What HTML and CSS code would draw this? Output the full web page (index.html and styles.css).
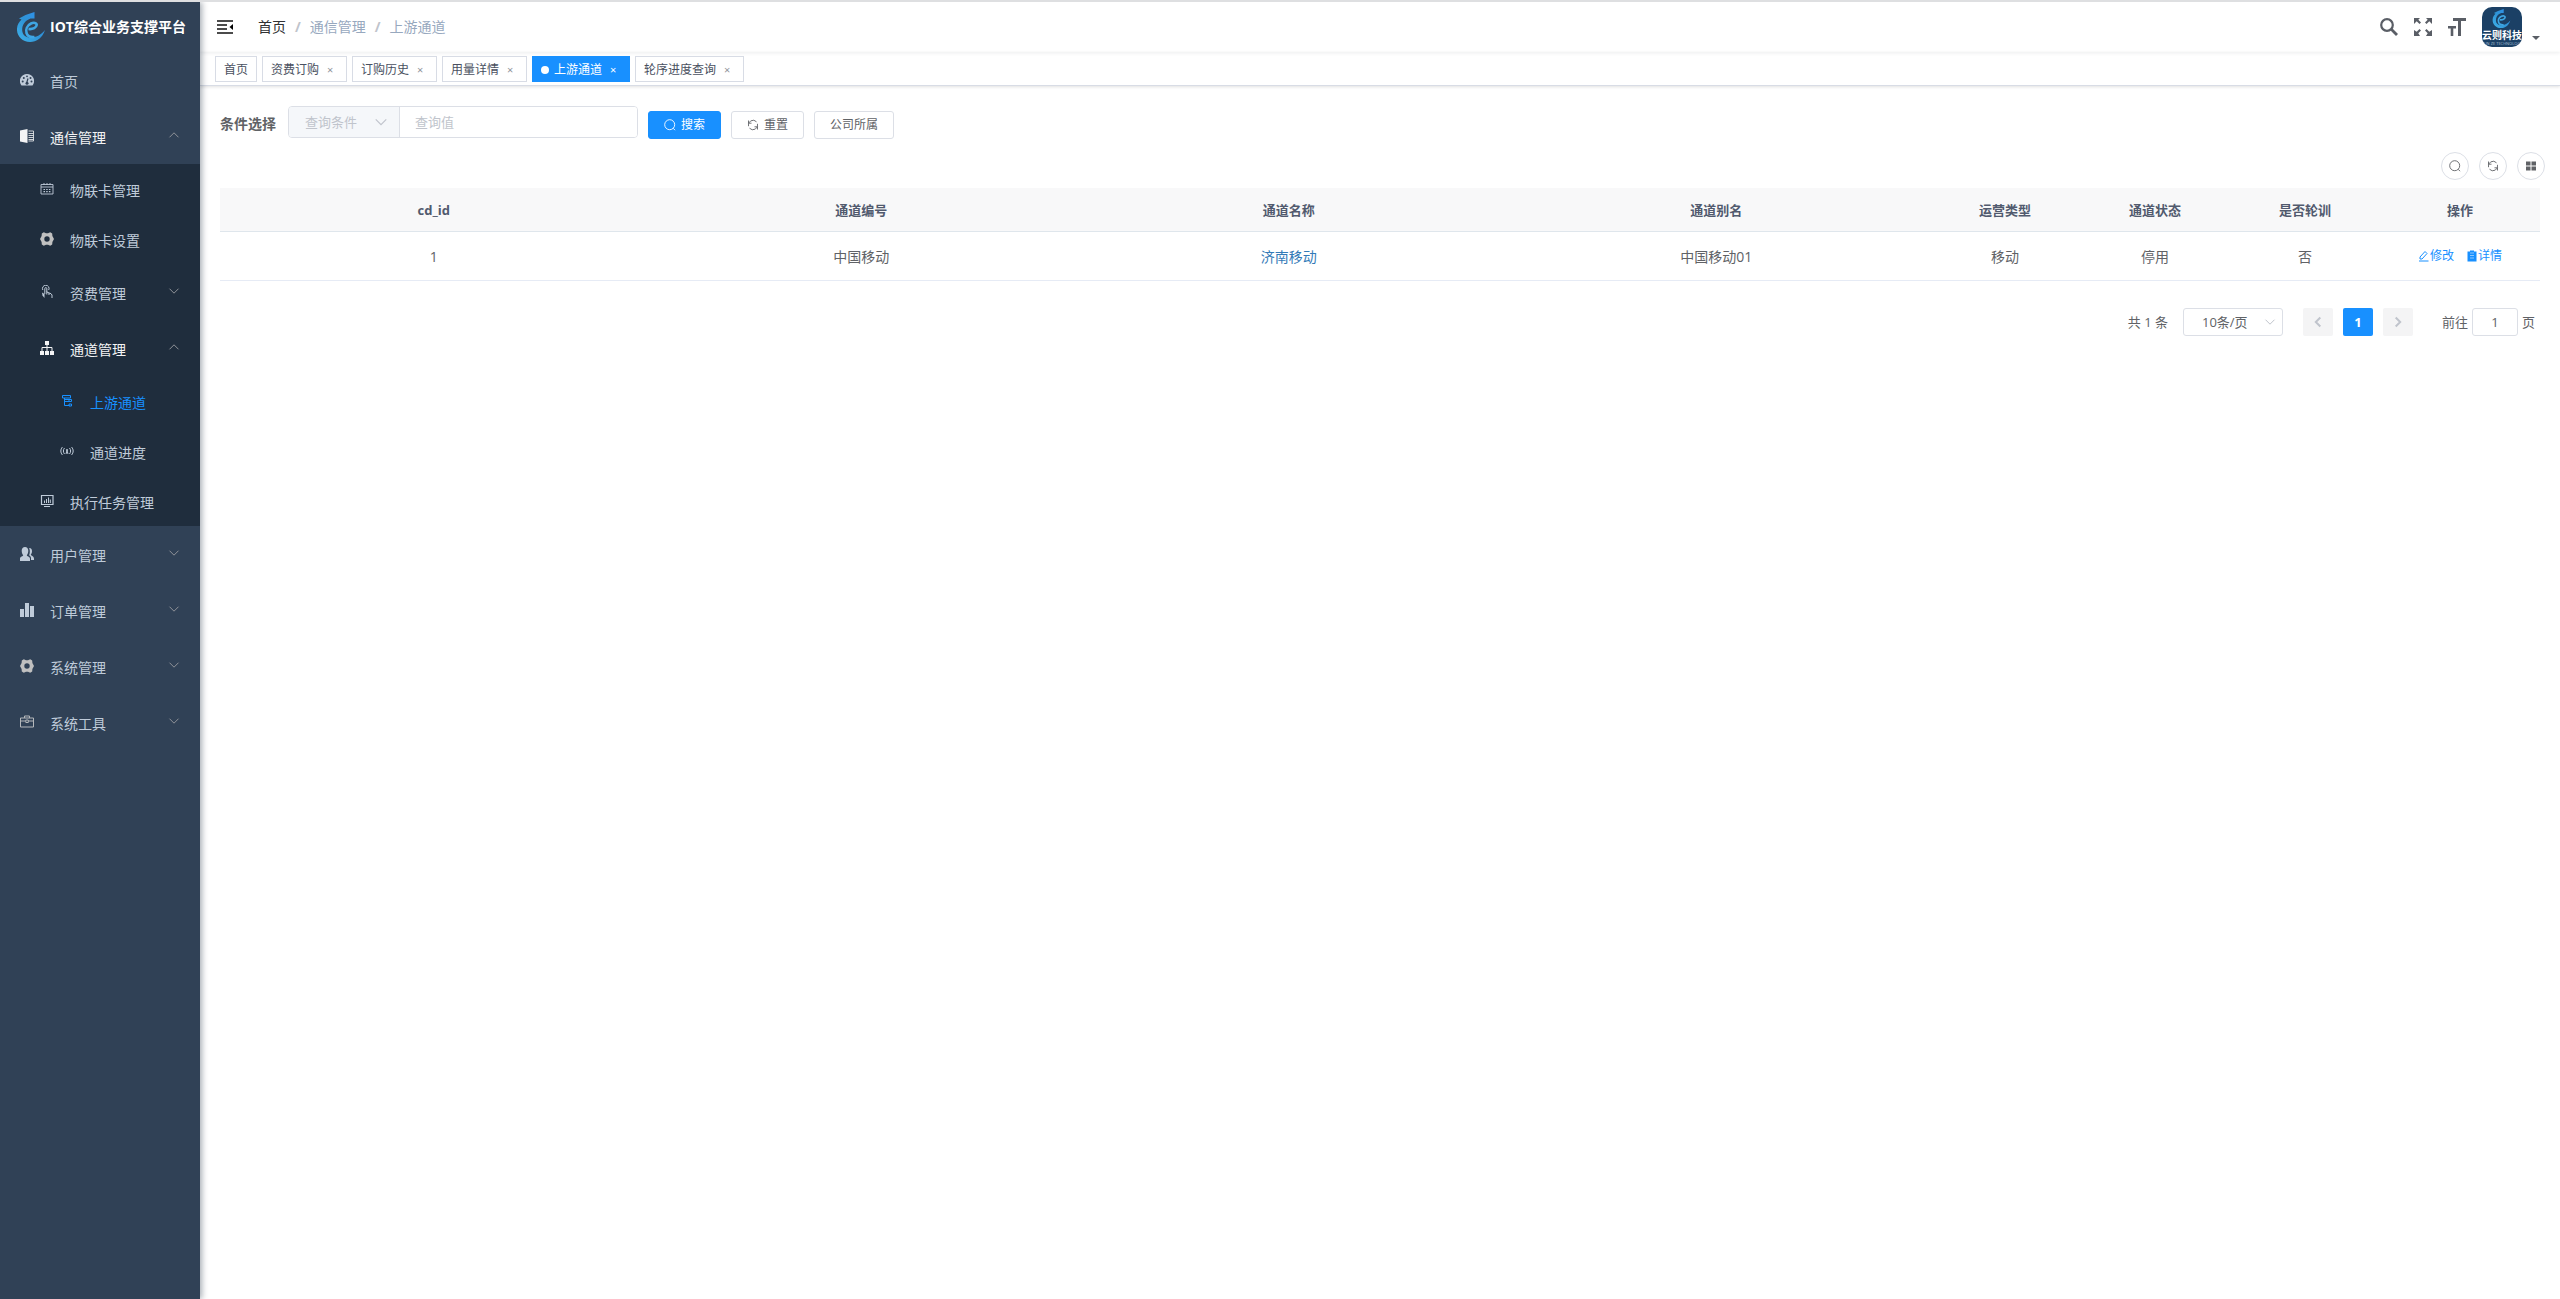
FILE: index.html
```html
<!DOCTYPE html>
<html lang="zh-CN">
<head>
<meta charset="utf-8">
<meta name="viewport" content="width=device-width, initial-scale=1">
<title>上游通道 - IOT综合业务支撑平台</title>
<link rel="stylesheet" href="styles.css">
</head>
<body>
<svg class="sprite" aria-hidden="true">
  <symbol id="down" viewBox="0 0 12 12"><path d="M1.5 3.7 6 8.2l4.500-4.500" fill="none" stroke="currentColor"/></symbol>
  <symbol id="search" viewBox="0 0 12 12"><path d="M9.300 9.300 11 11.200M10.700 5.700a5 5 0 1 1-10 0 5 5 0 0 1 10 0z" fill="none" stroke="currentColor" stroke-width=".9"/></symbol>
  <symbol id="refresh" viewBox="0 0 12 12"><path d="M1.500 7.200A4.700 4.700 0 0 1 9.500 2.800M10.500 4.800A4.700 4.700 0 0 1 2.500 9.200M1.500 1.500v2.700H4.500M10.500 10.500V7.800H7.500" fill="none" stroke="currentColor" stroke-width=".9"/></symbol>
  <linearGradient id="sea" x1="0" y1="1" x2="1" y2="0"><stop offset="0" stop-color="#3fb2ea"/><stop offset=".5" stop-color="#2f93d6"/><stop offset="1" stop-color="#2f8ff0"/></linearGradient>
  <symbol id="logo" viewBox="0 0 28 30">
    <path d="M2 6.500 8.500 3 17.500 0v6.500l-4 0C7.500 9 5 13 5.200 18.500 5.500 23 9 25.500 13 25.500c6 0 11-2.500 15-7.500-2.500 8-8.500 12-15 12C5 30-.5 24 0 16.500.3 12.500 2 10 4.500 7.500z" fill="url(#sea)"/>
    <path d="M11.500 17c4.500.5 8-1.500 8.200-4 .1-2.200-3-2.800-5.700-1.500-4 2-5.500 6-4.500 9.500 1 3 4 4.500 8 4" fill="none" stroke="#3fa6e4" stroke-width="2.600"/>
  </symbol>
  <symbol id="gear" viewBox="0 0 14 14"><path d="M3.800.3 6 1.300h2L10.200.3l2 1.300 .2 2.500L14 7l-1.600 2.900-.2 2.500-2 1.300L8 12.700H6l-2.200 1-2-1.300-.2-2.500L0 7l1.600-2.900.2-2.500zM7 4.300a2.700 2.700 0 1 0 0 5.400 2.700 2.700 0 0 0 0-5.400z" fill="#c0c0c0" fill-rule="evenodd"/></symbol>
</svg>

<div class="app">
  <aside class="sidebar">
    <a class="brand" href="#"><svg class="brand-logo"><use href="#logo"/></svg><h1>IOT综合业务支撑平台</h1></a>
    <nav>
      <a class="item" href="#"><svg class="ico" viewBox="0 0 14 14"><path d="M7 1a7 7 0 0 0-6 10.700l.5.800h11l.5-.800A7 7 0 0 0 7 1z" fill="currentColor"/><path d="M6.500 10.500 8 5.500" stroke="#304156" stroke-width="1.200"/><g fill="#304156"><circle cx="7" cy="10.300" r="1.500"/><circle cx="2.700" cy="8.500" r="1"/><circle cx="3.800" cy="5" r="1"/><circle cx="7" cy="3.300" r=".9"/><circle cx="10.500" cy="5" r="1"/><circle cx="11.500" cy="8.500" r="1"/></g></svg><span>首页</span></a>
      <button class="item open" type="button"><svg class="ico" viewBox="0 0 14 14"><path d="M0 1.500 7.500 0v14L0 12.500z" fill="currentColor"/><path d="M8.500 2h5v10h-5M8.500 4.500h5M8.500 6.500h5M8.500 8.500h5M8.500 10.500h5" fill="none" stroke="currentColor" stroke-width=".8"/></svg><span>通信管理</span><svg class="arrow up"><use href="#down"/></svg></button>
      <div class="sub">
        <a class="item small" href="#"><svg class="ico" viewBox="0 0 14 14"><path d="M1 2.500h12v9.500H1zM1 5h12M4 1v2M7 1v2M10 1v2" fill="none" stroke="currentColor" stroke-width=".9"/><path d="M3.500 7.500h7M3.500 9.700h7" stroke="currentColor" stroke-width="1.200" stroke-dasharray="1.500 1.200"/></svg><span>物联卡管理</span></a>
        <a class="item small" href="#"><svg class="ico"><use href="#gear"/></svg><span>物联卡设置</span></a>
        <button class="item" type="button"><svg class="ico" viewBox="0 0 14 14"><path d="M2.800 5a3.300 3.300 0 1 1 5.900 0" fill="none" stroke="currentColor"/><path d="M4.800 9V3.600a1 1 0 0 1 2 0V7l4.200 1.700 1 1.300v3M6.800 6.500v3M9 8v2" fill="none" stroke="currentColor"/><path d="M2 7.500 4.500 9v4L2.500 10.500z" fill="currentColor"/></svg><span>资费管理</span><svg class="arrow"><use href="#down"/></svg></button>
        <button class="item open" type="button"><svg class="ico" viewBox="0 0 14 14"><path d="M5 0h4v4H5zM0 10h4v4H0zM5 10h4v4H5zM10 10h4v4h-4z" fill="currentColor"/><path d="M7 4v6M2 10V6.500h10V10" fill="none" stroke="currentColor"/></svg><span>通道管理</span><svg class="arrow up"><use href="#down"/></svg></button>
        <div class="sub">
          <a class="item small active" href="#"><svg class="ico" viewBox="0 0 14 14"><path d="M2.500 1.500h8v2.500h-8zM4.500 4v7.500h5M4.500 7.500h5M4.500 5.500h5" fill="none" stroke="currentColor"/><path d="M9 5.500h2.500v2H9zM9 10h2.500v2H9z" fill="none" stroke="currentColor"/></svg><span>上游通道</span></a>
          <a class="item small" href="#"><svg class="ico" viewBox="0 0 14 14"><path d="M2.500 3C.3 5.300.3 8.700 2.500 11M4.500 4C3 5.800 3 8.200 4.500 10M11.500 3c2.200 2.300 2.200 5.700 0 8M9.500 4c1.500 1.800 1.500 4.200 0 6M7 6.500 6 10M7 6.500 8 10" fill="none" stroke="currentColor"/><circle cx="7" cy="6" r="1" fill="currentColor"/></svg><span>通道进度</span></a>
        </div>
        <a class="item small" href="#"><svg class="ico" viewBox="0 0 14 14"><path d="M1.500 1.500h11.500v9H1.500zM4 12.500h6" fill="none" stroke="currentColor" stroke-width="1.200"/><path d="M4.500 9V6.500M6.500 9V5M8.500 9V3.500M10.300 9V5.500" stroke="currentColor"/></svg><span>执行任务管理</span></a>
      </div>
      <button class="item" type="button"><svg class="ico" viewBox="0 0 14 14"><path d="M5 0c2 0 3.300 1.500 3.300 3.700S7.500 7.500 6.800 8.200c0 1 3.200 1.300 3.200 3.300V14H0v-2.500c0-2 3.200-2.300 3.200-3.300-.7-.7-1.500-2.300-1.500-4.500S3 0 5 0zM9 1c2.500 0 3 1.500 3 3.300S11.300 7 10.800 7.600c0 1.200 3.200 1.600 3.200 4v1.400h-3v-2c0-1.600-1.300-2.300-2-2.700.9-1.200 1.300-5.300 0-7.300z" fill="currentColor"/></svg><span>用户管理</span><svg class="arrow"><use href="#down"/></svg></button>
      <button class="item" type="button"><svg class="ico" viewBox="0 0 14 14"><path d="M0 6h4v8H0zM5 0h4v14H5zM10 3h4v11h-4z" fill="currentColor"/></svg><span>订单管理</span><svg class="arrow"><use href="#down"/></svg></button>
      <button class="item" type="button"><svg class="ico"><use href="#gear"/></svg><span>系统管理</span><svg class="arrow"><use href="#down"/></svg></button>
      <button class="item" type="button"><svg class="ico" viewBox="0 0 14 14"><path d="M.5 3h13v9H.5zM4.500 3V1h5v2M.5 6h5M8.500 6h5M5.800 5h2.500v2.500H5.800z" fill="none" stroke="#b5b8bb"/></svg><span>系统工具</span><svg class="arrow"><use href="#down"/></svg></button>
    </nav>
  </aside>

  <div class="page">
    <header class="navbar">
      <button class="fold" type="button" aria-label="折叠菜单"><svg viewBox="0 0 16 14"><path d="M0 1h16M0 5h10M0 9h10M0 13h16" stroke="#111" stroke-width="1.600"/><path d="M16 4v6l-3.500-3z"/></svg></button>
      <nav class="crumbs" aria-label="面包屑"><a href="#">首页</a><i>/</i><span>通信管理</span><i>/</i><span>上游通道</span></nav>
      <div class="tools">
        <button type="button" aria-label="搜索"><svg viewBox="0 0 18 18"><circle cx="7" cy="7" r="5.800" fill="none" stroke="currentColor" stroke-width="2.200"/><path d="m11.300 11.300 5.700 5.700" stroke="currentColor" stroke-width="2.800"/></svg></button>
        <button type="button" aria-label="全屏"><svg viewBox="0 0 18 18"><path d="M0 0h6L4.300 1.700 7 4.500 5.500 6 2.700 3.300 0 6zM18 0v6l-2.700-2.700L12.500 6 11 4.500l2.700-2.800L12 0zM0 18v-6l2.700 1.700L5.500 11 7 12.500l-2.700 2.800L6 18zM18 18h-6l1.700-2.700L11 12.500l1.500-1.500 2.800 2.700L18 12z" fill="currentColor"/></svg></button>
        <button type="button" aria-label="字号"><svg viewBox="0 0 18 18"><path d="M5 0h13v3h-5v15h-3V3H5zM0 8h8v2.500H5.300V18H2.700v-7.500H0z" fill="currentColor"/></svg></button>
        <button class="user" type="button" aria-label="用户菜单">
          <svg class="avatar" viewBox="0 0 40 40"><rect width="40" height="40" fill="#1b4065"/><use href="#logo" x="8" y="2" width="23" height="19"/><text class="av-name" x="20" y="32" text-anchor="middle">云则科技</text><text class="av-sub" x="20" y="38" text-anchor="middle">YUN ZE TECHNOLOGY</text></svg>
          <svg class="caret" viewBox="0 0 8 4"><path d="M0 0h8L4 4z" fill="currentColor"/></svg>
        </button>
      </div>
    </header>

    <nav class="tags" aria-label="标签页">
      <a class="tag" href="#">首页</a>
      <a class="tag" href="#">资费订购<b>×</b></a>
      <a class="tag" href="#">订购历史<b>×</b></a>
      <a class="tag" href="#">用量详情<b>×</b></a>
      <a class="tag current" href="#">上游通道<b>×</b></a>
      <a class="tag" href="#">轮序进度查询<b>×</b></a>
    </nav>

    <main>
      <form class="filter">
        <label for="q">条件选择</label>
        <div class="combo">
          <div class="pick"><select aria-label="查询条件"><option>查询条件</option></select><svg><use href="#down"/></svg></div>
          <input id="q" type="text" placeholder="查询值">
        </div>
        <div class="actions">
          <button class="btn primary" type="button"><svg><use href="#search"/></svg>搜索</button>
          <button class="btn" type="button"><svg><use href="#refresh"/></svg>重置</button>
          <button class="btn" type="button">公司所属</button>
        </div>
      </form>

      <div class="round">
        <button type="button" aria-label="隐藏搜索"><svg><use href="#search"/></svg></button>
        <button type="button" aria-label="刷新"><svg><use href="#refresh"/></svg></button>
        <button type="button" aria-label="显隐列"><svg viewBox="0 0 12 12"><path d="M1 1.500h4.500v4H1zM6.500 1.500H11v4H6.500zM1 6.500h4.500v4H1zM6.500 6.500H11v4H6.500z" fill="currentColor"/></svg></button>
      </div>

      <table>
        <colgroup><col><col><col><col><col class="w150"><col class="w150"><col class="w150"><col class="w160"></colgroup>
        <thead><tr><th>cd_id</th><th>通道编号</th><th>通道名称</th><th>通道别名</th><th>运营类型</th><th>通道状态</th><th>是否轮训</th><th>操作</th></tr></thead>
        <tbody><tr><td>1</td><td>中国移动</td><td><a class="name" href="#">济南移动</a></td><td>中国移动01</td><td>移动</td><td>停用</td><td>否</td>
          <td class="act"><div class="ops"><button type="button"><svg viewBox="0 0 12 12"><path d="M2 7 7 1.500l2 2L4 9H2zM1 11h9.500" fill="none" stroke="currentColor"/></svg>修改</button><button type="button"><svg viewBox="0 0 12 12"><path d="M1.500 1.500h2.500V.5h4v1h2.500v10h-9z" fill="currentColor"/><path d="M4 3h4M4 5.500h4M4 8h4" stroke="#fff" stroke-width=".5"/></svg>详情</button></div></td></tr></tbody>
      </table>

      <div class="pager">
        <span class="total">共 1 条</span>
        <div class="pick size"><select aria-label="每页条数"><option>10条/页</option></select><svg><use href="#down"/></svg></div>
        <div class="pages">
          <button type="button" aria-label="上一页" disabled><svg class="left"><use href="#down"/></svg></button>
          <button class="on" type="button">1</button>
          <button type="button" aria-label="下一页" disabled><svg class="right"><use href="#down"/></svg></button>
        </div>
        <label class="jump">前往<input type="text" value="1">页</label>
      </div>
    </main>
  </div>
</div>
</body>
</html>
```

FILE: styles.css
```css
* { box-sizing: border-box; }
body {
  margin: 0;
  background: #fff;
  border-top: 2px solid #dedfe1;
  color: #606266;
  font: 14px/20px "Open Sans", "Noto Sans CJK SC", sans-serif;
}
a { color: inherit; text-decoration: none; }
button, input, select { font: inherit; color: inherit; margin: 0; }
button { border: 0; padding: 0; background: none; cursor: pointer; }
svg { display: block; flex: none; }
.sprite { position: absolute; width: 0; height: 0; }

.app { display: flex; min-height: calc(100vh - 2px); }

/* Sidebar */
.sidebar {
  flex: none;
  width: 200px;
  background: #304156;
  color: #bfcbd9;
  box-shadow: 2px 0 6px rgba(0, 21, 41, .35);
  z-index: 1;
}
.brand { display: flex; align-items: center; gap: 5px; height: 50px; padding-left: 17px; color: #fff; white-space: nowrap; }
.brand-logo { width: 28px; height: 30px; }
.brand h1 { margin: 0; font-size: 14px; font-weight: 700; }
.item { display: flex; align-items: center; gap: 16px; width: 100%; height: 56px; padding: 0 20px; text-align: left; }
.item span { flex: 1; padding-top: 3px; }
.item.small { height: 50px; }
.item.open { color: #f4f4f5; }
.item.active { color: #1890ff; }
.ico { width: 14px; height: 14px; }
.arrow { width: 12px; height: 12px; color: #909399; margin-bottom: 2px; }
.up { transform: rotate(180deg); }
.sub { background: #1f2d3d; }
.sub .item { padding-left: 40px; }
.sub .sub .item { padding-left: 60px; }

/* Top bar */
.page { flex: 1; min-width: 0; }
.navbar { display: flex; align-items: center; height: 50px; padding: 0 20px 0 17px; box-shadow: 0 1px 4px rgba(0, 21, 41, .08); }
.fold svg { width: 16px; height: 14px; }
.crumbs { display: flex; margin-left: 25px; color: #97a8be; }
.crumbs a { color: #303133; }
.crumbs i { margin: 0 9px; font-style: normal; font-weight: 700; color: #c0c4cc; }
.tools { display: flex; align-items: center; gap: 16px; margin-left: auto; color: #5a5e66; }
.tools svg { width: 18px; height: 18px; }
.user { display: flex; align-items: flex-end; gap: 10px; }
.tools .avatar { width: 40px; height: 40px; border-radius: 10px; }
.tools .caret { width: 8px; height: 4px; margin-bottom: 7px; }
.av-name { font-size: 10px; font-weight: 700; fill: #fff; }
.av-sub { font-size: 4px; fill: #a9bfd2; }

/* Visited-page tabs */
.tags {
  display: flex;
  align-items: flex-start;
  gap: 5px;
  height: 34px;
  padding: 4px 15px 0;
  border-bottom: 1px solid #d8dce5;
  box-shadow: 0 1px 3px rgba(0, 0, 0, .12);
}
.tag { display: flex; align-items: center; height: 26px; padding: 2px 8px 0; border: 1px solid #d8dce5; color: #495060; font-size: 12px; line-height: 22px; }
.tag b { width: 16px; margin-left: 3px; font-size: 11px; font-weight: 400; text-align: center; color: #909399; }
.tag.current { border-color: #1890ff; background: #1890ff; color: #fff; }
.tag.current b { color: #fff; }
.tag.current::before { content: ""; width: 8px; height: 8px; margin-right: 5px; border-radius: 50%; background: #fff; }

/* Search form */
main { padding: 20px; }
.filter { display: flex; align-items: flex-start; }
.filter label { padding-top: 8px; font-weight: 700; }
.combo { display: flex; width: 350px; margin-left: 12px; border: 1px solid #dcdfe6; border-radius: 4px; overflow: hidden; font-size: 13px; }
.combo input { flex: 1; min-width: 0; height: 30px; padding: 0 15px; border: 0; background: #fff; }
.combo input::placeholder { color: #c0c4cc; }
.pick { display: grid; align-items: center; }
.pick select, .pick svg { grid-area: 1 / 1; }
.pick select { appearance: none; width: 100%; height: 100%; border: 0; background: transparent; }
.pick svg { justify-self: end; width: 14px; height: 14px; margin-right: 11px; color: #c0c4cc; pointer-events: none; }
.combo .pick { width: 111px; background: #f5f7fa; border-right: 1px solid #dcdfe6; }
.combo select { padding: 0 16px; color: #c0c4cc; }
.actions { display: flex; gap: 10px; padding: 5px 0 0 10px; }
.btn { display: flex; align-items: center; gap: 5px; height: 28px; padding: 0 15px; border: 1px solid #dcdfe6; border-radius: 3px; background: #fff; font-size: 12px; }
.btn svg { width: 12px; height: 12px; }
.primary { border-color: #1890ff; background: #1890ff; color: #fff; }

.round { display: flex; justify-content: flex-end; gap: 10px; margin: 13px -5px 8px 0; }
.round button { display: grid; place-items: center; width: 28px; height: 28px; border: 1px solid #dcdfe6; border-radius: 50%; }
.round svg { width: 12px; height: 12px; }

/* Table */
table { width: 100%; table-layout: fixed; border-spacing: 0; text-align: center; }
.w150 { width: 150px; }
.w160 { width: 160px; }
th { height: 44px; padding: 0; border-bottom: 1px solid #dfe6ec; background: #f8f8f9; color: #515a6e; font-size: 13px; font-weight: 700; }
td { height: 49px; padding: 2px 0 0; border-bottom: 1px solid #e6ebf5; }
td.act { padding: 0; }
.name { color: #337ab7; }
.ops { display: flex; justify-content: center; gap: 12px; }
.ops button { display: flex; align-items: center; color: #1890ff; font-size: 12px; }
.ops svg { width: 12px; height: 12px; }

/* Pagination */
.pager { display: flex; align-items: center; justify-content: flex-end; margin-top: 27px; padding-right: 5px; font-size: 13px; line-height: 28px; }
.size { width: 100px; height: 28px; margin: 0 20px 0 15px; border: 1px solid #dcdfe6; border-radius: 3px; }
.size select { padding: 0 34px 0 18px; line-height: 20px; }
.size svg { width: 12px; height: 12px; margin-right: 6px; }
.pages { display: flex; gap: 10px; }
.pages button { display: grid; place-items: center; width: 30px; height: 28px; border-radius: 2px; background: #f4f4f5; color: #c0c4cc; font-weight: 700; }
.pages .on { background: #1890ff; color: #fff; }
.pages svg { width: 12px; height: 12px; stroke-width: 2; }
.left { transform: rotate(90deg); }
.right { transform: rotate(-90deg); }
.jump { display: flex; margin-left: 29px; }
.jump input { width: 46px; height: 28px; margin: 0 4px; padding: 0 3px; border: 1px solid #dcdfe6; border-radius: 3px; background: #fff; text-align: center; }
```
